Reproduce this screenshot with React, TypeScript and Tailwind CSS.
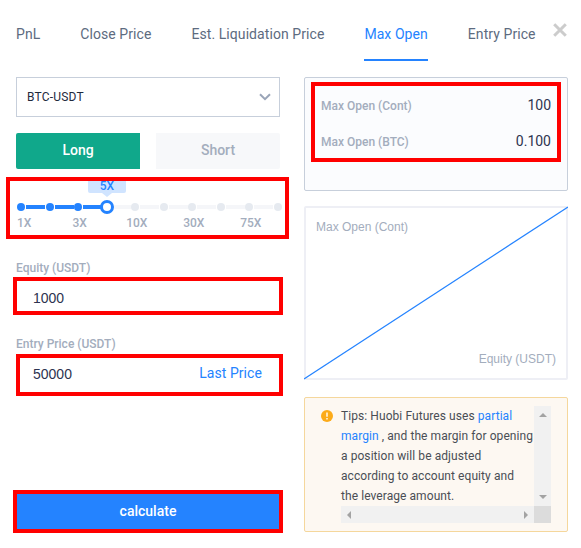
import { useState } from 'react';

const TABS = ['PnL', 'Close Price', 'Est. Liquidation Price', 'Max Open', 'Entry Price'];

const STEPS = ['1X', '', '3X', '5X', '10X', '', '30X', '', '75X', ''];

function Highlight({ className }: { className: string }) {
  return <div className={`pointer-events-none absolute z-10 border-4 border-[#ff0000] ${className}`} />;
}

function Tabs() {
  const [active, setActive] = useState('Max Open');

  return (
    <nav className="relative flex h-[61px] gap-10 pl-4">
      {TABS.map((tab) => (
        <button
          key={tab}
          onClick={() => setActive(tab)}
          className={`shrink-0 whitespace-nowrap border-b-2 pt-[9px] text-sm tracking-[0.07px] ${
            tab === active ? 'border-[#2483ff] text-[#2483ff]' : 'border-transparent text-[#5d6b80]'
          }`}
        >
          {tab}
        </button>
      ))}
      <button className="absolute left-[553px] top-[23px]" aria-label="Close">
        <svg width="14" height="14" viewBox="0 0 14 14" stroke="#cccccc" strokeWidth="3">
          <path d="M1.2 1.2 12.8 12.8M12.8 1.2 1.2 12.8" />
        </svg>
      </button>
    </nav>
  );
}

function LeverageSlider({ selected }: { selected: number }) {
  return (
    <div className="relative mt-2 h-[62px]">
      <div className="relative -mr-4 -ml-[9px] flex w-[285px] pt-[26px]">
        {STEPS.map((step, i) => (
          <div key={i} className="relative flex w-[28.5px] shrink-0 flex-col items-center">
            {i > 0 && (
              <div
                className={`absolute -left-[9.5px] top-[2px] h-1 w-[19px] ${
                  i <= selected ? 'bg-[#2483ff]' : 'bg-[#f5f6f9]'
                }`}
              />
            )}
            {i === selected ? (
              <div className="relative z-[1] -my-[3px] size-[14px] rounded-full border-[3px] border-[#2483ff] bg-white" />
            ) : (
              <div className={`size-2 rounded-full ${i < selected ? 'bg-[#2483ff]' : 'bg-[#e6eaf0]'}`} />
            )}
            {i !== selected && (
              <span
                className={`mt-1 text-xs leading-4 font-medium text-[#a3adbd] ${i === 0 ? 'ml-[6px]' : 'ml-[3px]'}`}
              >
                {step}
              </span>
            )}
          </div>
        ))}
        <div className="absolute left-[81px] top-0 h-4 w-[38px] rounded-b-xs bg-[#d0e4ff] pt-px text-center text-xs leading-4 font-medium text-[#2483ff]">
          {STEPS[selected]}
          <div className="absolute left-[14px] top-4 border-x-[5px] border-t-4 border-x-transparent border-t-[#d0e4ff]" />
        </div>
      </div>
      <Highlight className="-left-[10px] top-0 h-[62px] w-[283px]" />
    </div>
  );
}

function CalculatorForm() {
  return (
    <div className="flex w-[264px] flex-col">
      <div className="flex h-10 items-center justify-between border border-[#c7cfdb] pl-[10px] pr-2 text-xs tracking-[0.2px] text-[#1f2a3d]">
        BTC-USDT
        <svg width="12" height="8" viewBox="0 0 12 8" fill="none" stroke="#9aa5b8" strokeWidth="2">
          <path d="M1 1.2 6 6.2 11 1.2" />
        </svg>
      </div>
      <div className="mt-4 flex gap-4 text-sm font-medium">
        <button className="h-9 flex-1 rounded-l-xs bg-[#10a88b] pb-[2px] text-white">Long</button>
        <button className="h-9 flex-1 rounded-r-xs bg-[#f7f8fa] pb-[2px] text-[#a3adbd]">Short</button>
      </div>

      <LeverageSlider selected={3} />

      <label className="mt-[21px] text-xs leading-4 font-medium text-[#a3adbd]">Equity (USDT)</label>
      <div className="relative mt-[1px] h-[38px]">
        <input
          defaultValue="1000"
          className="h-full w-full pl-[17px] pt-1 font-['Liberation_Sans',sans-serif] text-sm text-[#2d3350] outline-none"
        />
        <Highlight className="-left-[3px] -right-[3px] inset-y-0" />
      </div>

      <label className="mt-[21px] text-xs leading-4 font-medium text-[#a3adbd]">Entry Price (USDT)</label>
      <div className="relative mt-[2px] flex h-[42px] items-center">
        <input
          defaultValue="50000"
          className="h-full w-40 pb-[2px] pl-[17px] font-['Liberation_Sans',sans-serif] text-sm text-[#2d3350] outline-none"
        />
        <button className="ml-auto mr-[18px] pb-1 text-sm tracking-[0.07px] text-[#2483ff]">Last Price</button>
        <Highlight className="-right-[3px] left-0 inset-y-0" />
      </div>

      <div className="relative mt-[94px] h-[43px]">
        <button className="h-full w-full bg-[#2483ff] pb-[2px] text-sm font-medium text-white">calculate</button>
        <Highlight className="-left-[3px] -right-[3px] inset-y-0" />
      </div>
    </div>
  );
}

function Results() {
  return (
    <div className="relative h-[114px] rounded-xs border border-[#c7cfdb] bg-[#fbfcfe] px-4 pt-[9px]">
      <div className="flex h-9 items-center justify-between">
        <span className="pt-px text-xs font-medium text-[#a3adbd]">Max Open (Cont)</span>
        <span className="text-sm text-[#2d3350]">100</span>
      </div>
      <div className="flex h-9 items-center justify-between">
        <span className="pt-px text-xs font-medium text-[#a3adbd]">Max Open (BTC)</span>
        <span className="text-sm text-[#2d3350]">0.100</span>
      </div>
      <Highlight className="left-[6px] top-[4px] h-[80px] w-[250px]" />
    </div>
  );
}

function Chart() {
  return (
    <div className="relative mt-[15px] flex h-[174px] flex-col justify-between rounded-xs border-2 border-[#eeeff5] px-[10px] py-[11px] font-['Liberation_Sans',sans-serif] text-xs text-[#a3adbd]">
      <span>Max Open (Cont)</span>
      <span className="self-end">Equity (USDT)</span>
      <svg className="absolute -left-[2px] -top-[2px]" width="264" height="174" viewBox="0 0 264 174">
        <path d="M0 173 264 1" stroke="#2483ff" strokeWidth="1.2" />
      </svg>
    </div>
  );
}

function Tips() {
  return (
    <div className="mt-[17px] flex h-[135px] rounded-xs border border-[#f5d79c] bg-[#fdf8f2] pl-4 pt-2">
      <svg className="mt-1 shrink-0" width="12" height="12" viewBox="0 0 12 12">
        <circle cx="6" cy="6" r="6" fill="#fcab1a" />
        <path d="M5.3 2.5h1.4v4.3H5.3zM5.3 8h1.4v1.4H5.3z" fill="#fff" />
      </svg>
      <div className="ml-2 grid h-[117px] grid-cols-[193px_17px] grid-rows-[100px_17px]">
        <p className="whitespace-nowrap text-xs leading-5 tracking-[0.07px] text-[#4a4e55]">
          Tips: Huobi Futures uses <a className="text-[#2483ff]">partial</a>
          <br />
          <a className="text-[#2483ff]">margin</a> , and the margin for opening
          <br />a position will be adjusted
          <br />
          according to account equity and
          <br />
          the leverage amount.
        </p>
        <div className="flex flex-col items-center justify-between bg-[#f1f1f1] py-[7px]">
          <div className="border-x-4 border-b-4 border-x-transparent border-b-[#a3a3a3]" />
          <div className="border-x-4 border-t-4 border-x-transparent border-t-[#a3a3a3]" />
        </div>
        <div className="flex items-center justify-between bg-[#f1f1f1] px-[6px]">
          <div className="border-y-4 border-r-4 border-y-transparent border-r-[#a3a3a3]" />
          <div className="border-y-4 border-l-4 border-y-transparent border-l-[#a3a3a3]" />
        </div>
        <div className="bg-[#dcdcdc]" />
      </div>
    </div>
  );
}

export default function App() {
  return (
    <div className="h-[548px] w-[581px] overflow-hidden bg-white font-[Roboto,sans-serif]">
      <Tabs />
      <main className="flex gap-6 pl-4 pt-4">
        <CalculatorForm />
        <div className="w-[264px]">
          <Results />
          <Chart />
          <Tips />
        </div>
      </main>
    </div>
  );
}
